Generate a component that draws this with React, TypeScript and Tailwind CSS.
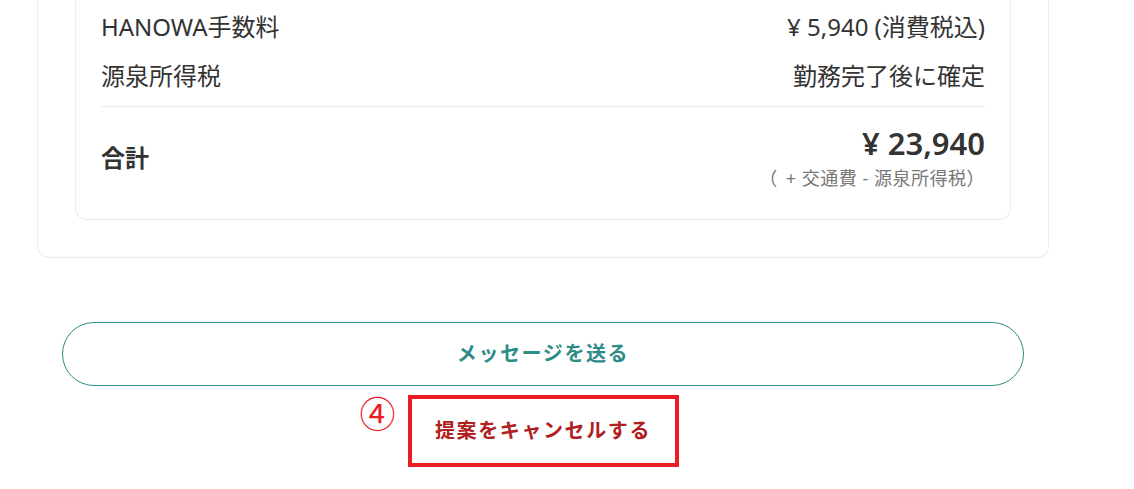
const rows = [
  { label: "HANOWA手数料", value: "¥ 5,940 (消費税込)" },
  { label: "源泉所得税", value: "勤務完了後に確定" },
]

const App = () => {
  return (
    <div className="min-h-screen bg-white font-['Noto_Sans','Noto_Sans_CJK_JP',sans-serif] text-[#333333]">
      <div className="ml-[37px] w-[1012px]">
        {/* summary card, top is scrolled off */}
        <div className="border-x border-b border-[#ececec] rounded-b-[12px] px-[37px] pb-[37px]">
          <div className="border-x border-b border-[#ececec] rounded-b-[12px] px-[25px] pt-[9px] pb-[27px]">
            <div className="flex flex-col gap-[13px]">
              {rows.map((r) => (
                <div key={r.label} className="flex justify-between text-[24px] leading-[36px]">
                  <span>{r.label}</span>
                  <span>{r.value}</span>
                </div>
              ))}
            </div>
            <div className="mt-[12px] h-px bg-[#ececec]" />
            <div className="flex items-center justify-between pt-[16px]">
              <span className="text-[24px] font-bold leading-[36px]">合計</span>
              <div className="flex flex-col items-end">
                <span className="text-[31px] font-semibold leading-[40px]">¥ 23,940</span>
                <span className="mt-[2px] text-[18px] leading-[27px] tracking-[0.5px] text-[#777777]">
                  <span className="mr-[8px]">（</span>+ 交通費 - 源泉所得税）
                </span>
              </div>
            </div>
          </div>
        </div>

        <div className="mt-[64px] px-[25px]">
          <button className="flex h-[64px] w-full items-center justify-center rounded-full border border-[#2e8c88] text-[20px] font-bold tracking-[1.6px] text-[#2e8c88]">
            メッセージを送る
          </button>
        </div>

        <div className="mt-[9px] flex justify-center">
          <div className="relative">
            <span className="absolute -left-[48px] top-[-3px] font-['Noto_Sans_CJK_JP',sans-serif] text-[36px] leading-[40px] text-[#ec1c24]">④</span>
            <button className="flex h-[72px] w-[271px] items-center justify-center border-4 border-[#ec1c24] text-[20px] font-bold tracking-[1.6px] text-[#b0201f]">
              提案をキャンセルする
            </button>
          </div>
        </div>
      </div>
    </div>
  )
}

export default App
